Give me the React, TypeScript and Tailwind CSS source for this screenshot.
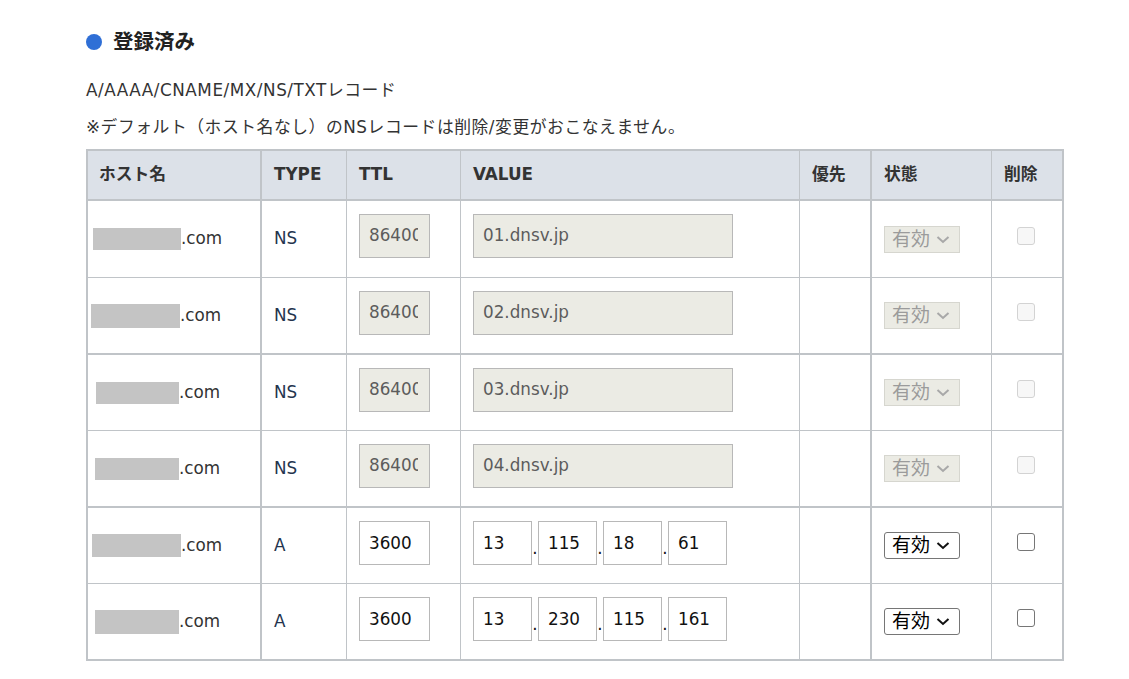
import React from "react";

type Row = {
  hostCls: string;
  type: string;
  ttl: string;
  value?: string;
  ip?: string[];
  disabled: boolean;
  rowCls: string;
};

const rows: Row[] = [
  { hostCls: "ml-[5px] w-[88px] h-[22px]", type: "NS", ttl: "86400", value: "01.dnsv.jp", disabled: true, rowCls: "h-[77px] border-b" },
  { hostCls: "ml-[3px] w-[89px] h-[24px]", type: "NS", ttl: "86400", value: "02.dnsv.jp", disabled: true, rowCls: "h-[77px] border-b-2" },
  { hostCls: "ml-[8px] w-[83px] h-[22px]", type: "NS", ttl: "86400", value: "03.dnsv.jp", disabled: true, rowCls: "h-[76px] border-b" },
  { hostCls: "ml-[7px] w-[84px] h-[22px]", type: "NS", ttl: "86400", value: "04.dnsv.jp", disabled: true, rowCls: "h-[77px] border-b-2" },
  { hostCls: "ml-[4px] w-[89px] h-[23px]", type: "A", ttl: "3600", ip: ["13", "115", "18", "61"], disabled: false, rowCls: "h-[76px] border-b" },
  { hostCls: "ml-[7px] w-[84px] h-[24px]", type: "A", ttl: "3600", ip: ["13", "230", "115", "161"], disabled: false, rowCls: "h-[77px] border-b-2" },
];

const GRID = "grid grid-cols-[174px_85px_114px_339px_72px_120px_72px] border-[#c0c4c8]";

function Chevron({ color }: { color: string }) {
  return (
    <svg width="14" height="9" viewBox="0 0 14 9" className="ml-[6px]">
      <polyline points="1.5,2 7,7 12.5,2" fill="none" stroke={color} strokeWidth="2" />
    </svg>
  );
}

function StatusSelect({ disabled }: { disabled: boolean }) {
  if (disabled) {
    return (
      <div className="flex h-[27px] w-[76px] items-center border border-[#d6d6cf] bg-[#ebebe4] pl-[7px] text-[19px] leading-none text-[#9b9b9b]">
        <span>有効</span>
        <Chevron color="#a8a8a8" />
      </div>
    );
  }
  return (
    <div className="flex h-[27px] w-[76px] items-center rounded-[3px] border border-[#767676] bg-white pl-[7px] text-[19px] leading-none text-black">
      <span>有効</span>
      <Chevron color="#111" />
    </div>
  );
}

function Check({ disabled }: { disabled: boolean }) {
  return disabled ? (
    <span className="mb-[7px] block h-[18px] w-[18px] rounded-[3px] border border-[#d3d3d3] bg-[#f7f7f7]" />
  ) : (
    <span className="mb-[7px] block h-[18px] w-[18px] rounded-[3px] border-[1.5px] border-[#767676] bg-white" />
  );
}

function DisabledField({ text, boxW, innerW }: { text: string; boxW: string; innerW: string }) {
  return (
    <div className={`mb-[6px] flex h-[44px] items-center border border-[#b8b8b8] bg-[#ebebe4] pl-[9px] text-[#5c5c5c] ${boxW}`}>
      <div className={`overflow-hidden whitespace-nowrap ${innerW}`}>{text}</div>
    </div>
  );
}

export default function App() {
  return (
    <div className="min-h-screen bg-white px-[86px] font-['DejaVu_Sans','Noto_Sans_CJK_JP',sans-serif] text-[16.8px] text-[#333]">
      <div className="mt-[28px] flex h-[28px] items-center">
        <span className="block h-[16px] w-[16px] rounded-full bg-[#2f6fd6]" />
        <span className="ml-[11px] text-[20.5px] font-bold leading-[28px] text-[#222]">登録済み</span>
      </div>
      <div className="mt-[16px] leading-[37px] tracking-[0.55px]">A/AAAA/CNAME/MX/NS/TXTレコード</div>
      <div className="leading-[37px] tracking-[0.55px]">※デフォルト（ホスト名なし）のNSレコードは削除/変更がおこなえません。</div>

      <div className="mt-[3px] w-[978px] border-l-2 border-t-2 border-[#c0c4c8]">
        <div className={`${GRID} h-[50px] border-b-2 bg-[#dce1e8] font-bold`}>
          <div className="flex items-center border-r-2 border-[#c0c4c8] pl-[11px]">ホスト名</div>
          <div className="flex items-center border-r border-[#c0c4c8] pl-[12px]">TYPE</div>
          <div className="flex items-center border-r border-[#c0c4c8] pl-[12px]">TTL</div>
          <div className="flex items-center border-r border-[#c0c4c8] pl-[12px]">VALUE</div>
          <div className="flex items-center border-r-2 border-[#c0c4c8] pl-[12px]">優先</div>
          <div className="flex items-center border-r border-[#c0c4c8] pl-[12px]">状態</div>
          <div className="flex items-center border-r-2 border-[#c0c4c8] pl-[12px]">削除</div>
        </div>

        {rows.map((r, i) => (
          <div key={i} className={`${GRID} ${r.rowCls}`}>
            <div className="flex items-center border-r-2 border-[#c0c4c8]">
              <span className={`block bg-[#c4c4c4] ${r.hostCls}`} />
              <span>.com</span>
            </div>
            <div className="flex items-center border-r border-[#c0c4c8] pl-[12px] text-[#24344e]">{r.type}</div>
            <div className="flex items-center border-r border-[#c0c4c8] pl-[12px]">
              {r.disabled ? (
                <DisabledField text={r.ttl} boxW="w-[71px]" innerW="w-[49px]" />
              ) : (
                <input
                  readOnly
                  value={r.ttl}
                  className="mb-[6px] h-[44px] w-[71px] border border-[#b8b8b8] bg-white px-[9px] text-[#111] outline-none"
                />
              )}
            </div>
            <div className="flex items-center border-r border-[#c0c4c8] pl-[12px]">
              {r.value ? (
                <DisabledField text={r.value} boxW="w-[260px]" innerW="w-[240px]" />
              ) : (
                <div className="mb-[6px] flex items-center">
                  {r.ip!.map((p, j) => (
                    <React.Fragment key={j}>
                      {j > 0 && (
                        <span className="flex h-[44px] w-[6px] items-end justify-center pb-[7px] leading-[20px] text-[#111]">.</span>
                      )}
                      <input
                        readOnly
                        value={p}
                        className="h-[44px] w-[59px] border border-[#b8b8b8] bg-white px-[9px] text-[#111] outline-none"
                      />
                    </React.Fragment>
                  ))}
                </div>
              )}
            </div>
            <div className="border-r-2 border-[#c0c4c8]" />
            <div className="flex items-center border-r border-[#c0c4c8] pl-[12px]">
              <StatusSelect disabled={r.disabled} />
            </div>
            <div className="flex items-center justify-center border-r-2 border-[#c0c4c8] pr-[3px]">
              <Check disabled={r.disabled} />
            </div>
          </div>
        ))}
      </div>
    </div>
  );
}
